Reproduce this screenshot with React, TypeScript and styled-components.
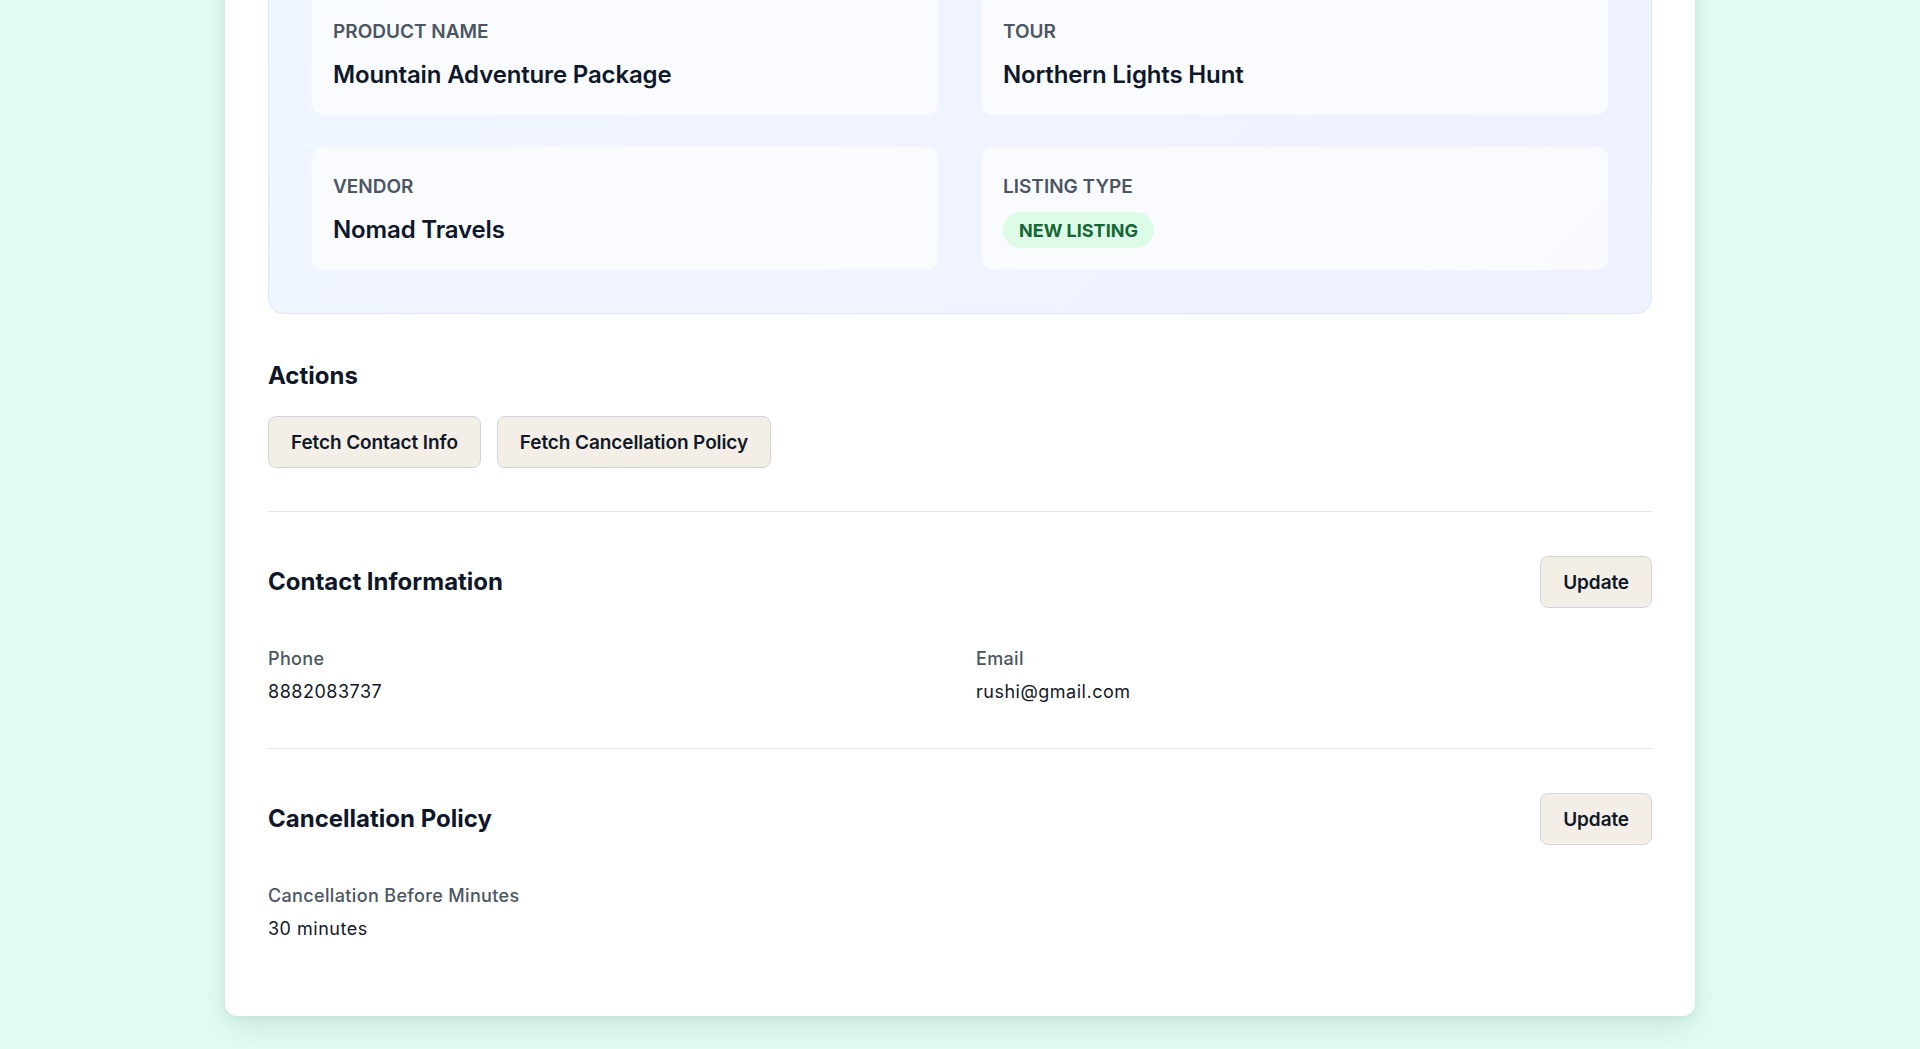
import React from "react";
import styled, { createGlobalStyle } from "styled-components";

const GlobalStyle = createGlobalStyle`
  * { box-sizing: border-box; }
  html, body { margin: 0; padding: 0; }
  body {
    background: #e1fcf3;
    font-family: Inter, "Noto Sans", "Liberation Sans", sans-serif;
    color: #0f172a;
    -webkit-font-smoothing: antialiased;
  }
`;

const Viewport = styled.div`
  height: 100vh;
  overflow: hidden;
  display: flex;
  flex-direction: column;
  justify-content: flex-end;
  align-items: center;
  padding-bottom: 33px;
`;

const Card = styled.div`
  flex-shrink: 0;
  width: 1470px;
  background: #ffffff;
  border-radius: 12px;
  box-shadow: 0 12px 28px rgba(15, 60, 50, 0.1), 0 2px 6px rgba(15, 60, 50, 0.06);
  padding: 40px 43px 29px;
`;

const CardTitle = styled.h1`
  margin: 0 0 32px;
  font-size: 30px;
  font-weight: 700;
  color: #0f172a;
`;

const InfoPanel = styled.div`
  border: 1px solid #dbe5fb;
  border-radius: 16px;
  background: linear-gradient(135deg, #f0f6ff 0%, #eef2ff 100%);
  padding: 43px;
  display: grid;
  grid-template-columns: 1fr 1fr;
  column-gap: 44px;
  row-gap: 32px;
`;

const InfoCard = styled.div`
  background: rgba(255, 255, 255, 0.62);
  border-radius: 12px;
  padding: 26px 21px 22px;
  display: flex;
  flex-direction: column;
  align-items: flex-start;
  gap: 11px;
`;

const InfoLabel = styled.div`
  font-size: 19px;
  line-height: 28px;
  font-weight: 600;
  text-transform: uppercase;
  color: #4b5563;
`;

const InfoValue = styled.div`
  font-size: 24px;
  line-height: 36px;
  font-weight: 600;
  color: #0f172a;
  letter-spacing: -0.15px;
`;

const Badge = styled.span`
  display: inline-flex;
  align-items: center;
  height: 36px;
  padding: 0 16px;
  border-radius: 999px;
  background: #dcfce7;
  color: #166534;
  font-size: 18px;
  font-weight: 700;
  text-transform: uppercase;
`;

const Section = styled.section<{ $last?: boolean }>`
  padding: 44px 0 ${(p) => (p.$last ? "44px" : "42px")};
  border-bottom: ${(p) => (p.$last ? "none" : "1px solid #e2e8f0")};
`;

const ActionsSection = styled(Section)`
  padding-bottom: 43px;
`;

const SectionHeader = styled.div`
  display: flex;
  align-items: center;
  justify-content: space-between;
  margin-bottom: 37px;
`;

const SectionTitle = styled.h2<{ $spaced?: boolean }>`
  margin: 0 0 ${(p) => (p.$spaced ? "22px" : "0")};
  font-size: 24px;
  line-height: 36px;
  font-weight: 700;
  color: #0f172a;
`;

const ButtonRow = styled.div`
  display: flex;
  gap: 16px;
`;

const Button = styled.button`
  height: 52px;
  padding: 0 22px;
  border: 1px solid #d3d5de;
  border-radius: 8px;
  background: #f3efe7;
  color: #111827;
  font-family: inherit;
  font-size: 19px;
  font-weight: 600;
  letter-spacing: -0.1px;
  cursor: pointer;
`;

const FieldGrid = styled.div`
  display: grid;
  grid-template-columns: 1fr 1fr;
  column-gap: 32px;
`;

const Field = styled.div`
  display: flex;
  flex-direction: column;
  gap: 5px;
`;

const FieldLabel = styled.div`
  font-size: 18px;
  line-height: 28px;
  font-weight: 500;
  color: #4b5563;
  letter-spacing: 0.35px;
`;

const FieldValue = styled.div`
  font-size: 18px;
  line-height: 28px;
  font-weight: 400;
  color: #111827;
  letter-spacing: 0.5px;
`;

export default function App() {
  return (
    <>
      <GlobalStyle />
      <Viewport>
        <Card>
          <CardTitle>Listing Details</CardTitle>
          <InfoPanel>
            <InfoCard>
              <InfoLabel>Product Name</InfoLabel>
              <InfoValue>Mountain Adventure Package</InfoValue>
            </InfoCard>
            <InfoCard>
              <InfoLabel>Tour</InfoLabel>
              <InfoValue>Northern Lights Hunt</InfoValue>
            </InfoCard>
            <InfoCard>
              <InfoLabel>Vendor</InfoLabel>
              <InfoValue>Nomad Travels</InfoValue>
            </InfoCard>
            <InfoCard>
              <InfoLabel>Listing Type</InfoLabel>
              <Badge>New Listing</Badge>
            </InfoCard>
          </InfoPanel>

          <ActionsSection>
            <SectionTitle $spaced>Actions</SectionTitle>
            <ButtonRow>
              <Button>Fetch Contact Info</Button>
              <Button>Fetch Cancellation Policy</Button>
            </ButtonRow>
          </ActionsSection>

          <Section>
            <SectionHeader>
              <SectionTitle>Contact Information</SectionTitle>
              <Button>Update</Button>
            </SectionHeader>
            <FieldGrid>
              <Field>
                <FieldLabel>Phone</FieldLabel>
                <FieldValue>8882083737</FieldValue>
              </Field>
              <Field>
                <FieldLabel>Email</FieldLabel>
                <FieldValue>rushi@gmail.com</FieldValue>
              </Field>
            </FieldGrid>
          </Section>

          <Section $last>
            <SectionHeader>
              <SectionTitle>Cancellation Policy</SectionTitle>
              <Button>Update</Button>
            </SectionHeader>
            <FieldGrid>
              <Field>
                <FieldLabel>Cancellation Before Minutes</FieldLabel>
                <FieldValue>30 minutes</FieldValue>
              </Field>
            </FieldGrid>
          </Section>
        </Card>
      </Viewport>
    </>
  );
}
